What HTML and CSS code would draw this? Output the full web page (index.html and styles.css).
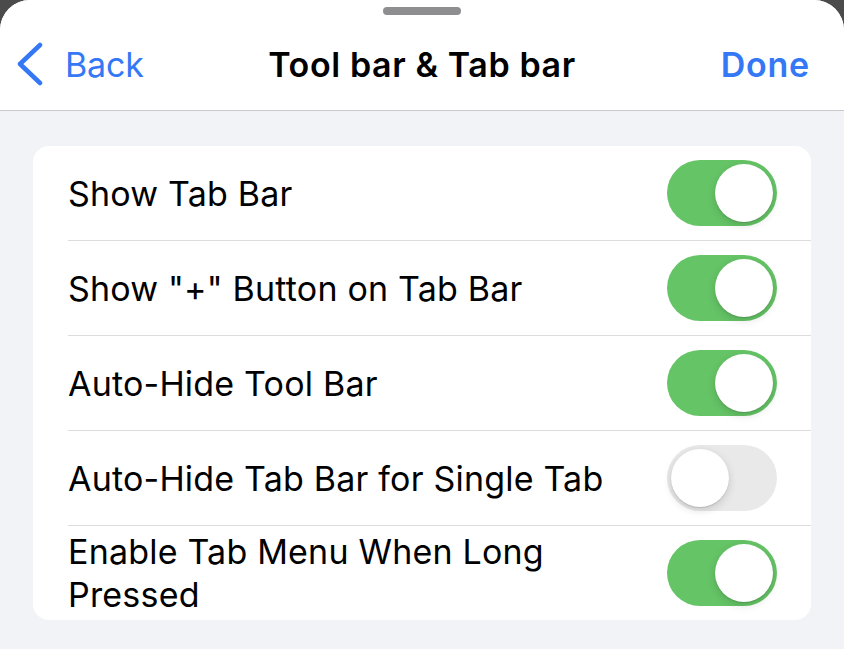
FILE: index.html
```html
<!DOCTYPE html>
<html>
<head>
<meta charset="utf-8">
<link rel="stylesheet" href="styles.css">
</head>
<body>
<div class="sheet">
  <header class="header">
    <div class="grabber"></div>
    <nav class="nav">
      <a class="back">
        <svg class="chev" width="28" height="44" viewBox="0 0 28 44"><path d="M24 3 L4 22 L24 41" fill="none" stroke="#3478f6" stroke-width="4.5" stroke-linecap="round" stroke-linejoin="round"/></svg>
        <span>Back</span>
      </a>
      <div class="title">Tool bar &amp; Tab bar</div>
      <a class="done">Done</a>
    </nav>
  </header>
  <main class="content">
    <section class="card">
      <div class="row"><span class="label">Show Tab Bar</span><span class="toggle on"><span class="knob"></span></span></div>
      <div class="row"><span class="label">Show "+" Button on Tab Bar</span><span class="toggle on"><span class="knob"></span></span></div>
      <div class="row"><span class="label">Auto-Hide Tool Bar</span><span class="toggle on"><span class="knob"></span></span></div>
      <div class="row"><span class="label">Auto-Hide Tab Bar for Single Tab</span><span class="toggle off"><span class="knob"></span></span></div>
      <div class="row"><span class="label">Enable Tab Menu When Long Pressed</span><span class="toggle on"><span class="knob"></span></span></div>
    </section>
  </main>
</div>
</body>
</html>
```
FILE: styles.css
```css
html, body {
  margin: 0;
  padding: 0;
  background: #4b4b4b;
  height: 100%;
}
body {
  font-family: Inter, "Liberation Sans", sans-serif;
  -webkit-font-smoothing: antialiased;
}
.sheet {
  background: #f2f3f6;
  border-radius: 30px 30px 0 0;
  overflow: hidden;
  min-height: 100%;
}
.header {
  background: #fff;
  height: 110px;
  border-bottom: 1px solid #c9c9cc;
  display: flex;
  flex-direction: column;
  align-items: center;
}
.grabber {
  width: 78px;
  height: 8px;
  border-radius: 4px;
  background: #8e8e90;
  margin-top: 7px;
}
.nav {
  width: 100%;
  box-sizing: border-box;
  display: grid;
  grid-template-columns: 1fr auto 1fr;
  align-items: center;
  padding: 0 34px;
  margin-top: 20px;
  height: 58px;
}
.back {
  display: flex;
  align-items: center;
  gap: 21px;
  margin-left: -18px;
  color: #3478f6;
  font-size: 34px;
  letter-spacing: -0.2px;
}
.chev { display: block; }
.title {
  font-size: 34px;
  font-weight: 600;
  color: #000;
  letter-spacing: 0.6px;
}
.done {
  justify-self: end;
  color: #3478f6;
  font-size: 34px;
  font-weight: 600;
  letter-spacing: 0.8px;
}
.content {
  padding: 35px 33px 30px;
}
.card {
  background: #fff;
  border-radius: 16px;
}
.row {
  display: flex;
  align-items: center;
  min-height: 94px;
  margin-left: 35px;
  padding-right: 34px;
  border-bottom: 1px solid #dcdcde;
  gap: 30px;
}
.row:last-child { border-bottom: none; }
.label {
  flex: 1;
  font-size: 34px;
  line-height: 43px;
  color: #000;
  letter-spacing: 0.2px;
}
.toggle {
  flex: none;
  width: 110px;
  height: 66px;
  border-radius: 33px;
  box-sizing: border-box;
  padding: 4px;
  display: flex;
}
.toggle.on { background: #65c466; justify-content: flex-end; }
.toggle.off { background: #e9e9ea; justify-content: flex-start; }
.knob {
  width: 58px;
  height: 58px;
  border-radius: 50%;
  background: #fff;
  box-shadow: 0 3px 8px rgba(0,0,0,0.15), 0 1px 1px rgba(0,0,0,0.12);
}
```
